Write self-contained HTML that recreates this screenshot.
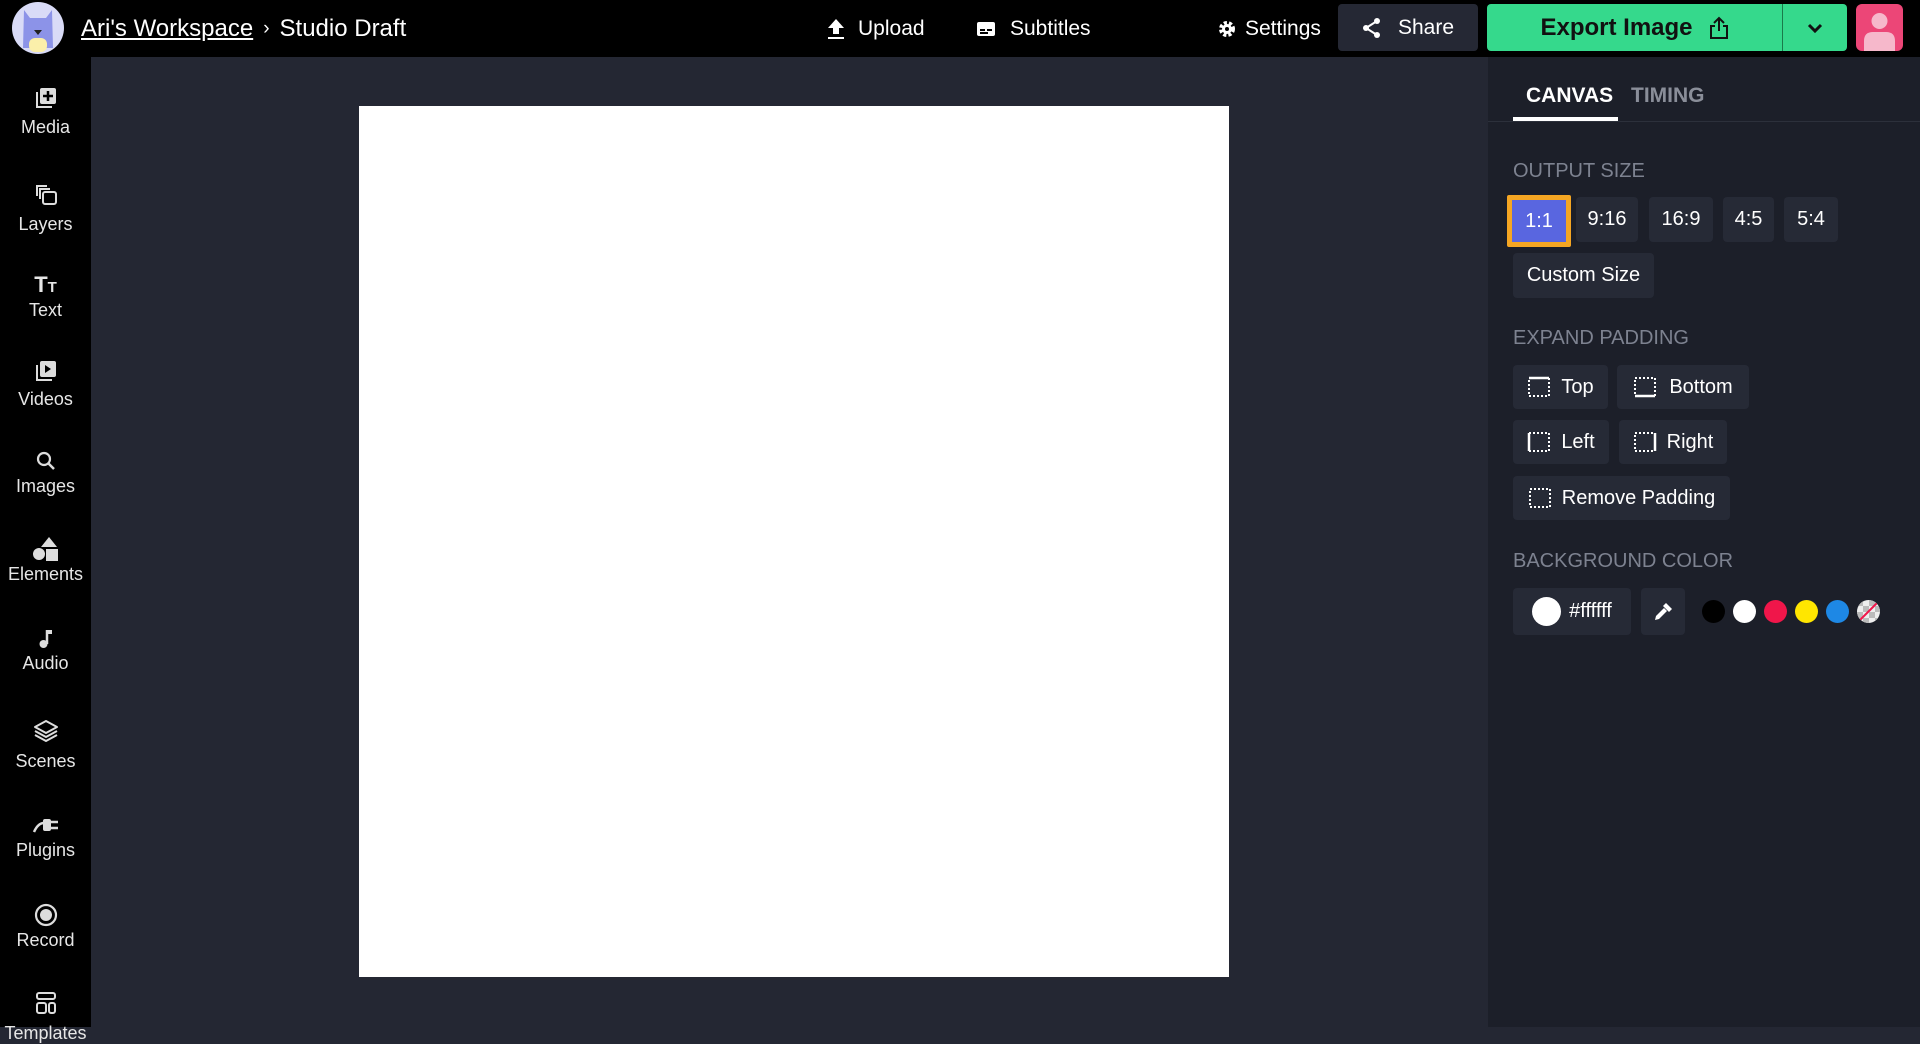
<!DOCTYPE html>
<html><head><meta charset="utf-8"><style>
*{box-sizing:border-box;margin:0;padding:0}
body{width:1920px;height:1027px;overflow:hidden;background:#242733;font-family:"Liberation Sans",sans-serif;color:#fff;position:relative}
.abs{position:absolute}
#top{left:0;top:0;width:1920px;height:57px;background:#000}
#side{left:0;top:57px;width:91px;height:970px;background:#000}
#panel{left:1488px;top:57px;width:432px;height:970px;background:#1c1f29}
.si{position:absolute;left:0;width:91px;text-align:center;font-size:18px;color:#e6e6e6}
.si svg{display:block;margin:0 auto}
.btn{position:absolute;background:#262a36;border-radius:4px;font-size:20px;color:#fff;display:flex;align-items:center;justify-content:center}
.lbl{position:absolute;left:1513px;font-size:20px;color:#7d8290}
.tb{position:absolute;top:0;height:57px;display:flex;align-items:center;font-size:21px;color:#fff}
.dot{position:absolute;width:23px;height:23px;border-radius:50%;top:600px}
</style></head><body>
<div class="abs" id="top"></div>
<div class="abs" id="side"></div>
<div class="abs" id="panel"></div>
<svg class="abs" style="left:12px;top:2px" width="52" height="52" viewBox="0 0 52 52"><circle cx="26" cy="26" r="26" fill="#d9dbf7"/><path d="M12 8 L18 16 L34 16 L40 8 L41 46 L11 46 Z" fill="#8c93e8"/><path d="M22 28 L30 28 L26 33Z" fill="#222"/><rect x="17" y="36" width="18" height="14" rx="6" fill="#fbefaa"/></svg>
<div class="tb" style="left:81px;font-size:24px"><span style="text-decoration:underline">Ari's Workspace</span><span style="margin:0 10px;font-size:19px">›</span>Studio Draft</div>
<div class="tb" style="left:826px"><svg width="20" height="22" viewBox="0 0 20 22"><path d="M10 1 L18 10 H13 V16 H7 V10 H2Z" fill="#fff"/><rect x="2" y="19" width="16" height="2" fill="#fff"/></svg><span style="margin-left:12px">Upload</span></div>
<div class="tb" style="left:976px"><svg width="20" height="16" viewBox="0 0 20 16"><rect x="1" y="1" width="18" height="14" rx="2" fill="#fff"/><rect x="4" y="8" width="5" height="2" fill="#000"/><rect x="11" y="8" width="5" height="2" fill="#000"/><rect x="4" y="11" width="8" height="2" fill="#000"/></svg><span style="margin-left:14px">Subtitles</span></div>
<div class="tb" style="left:1218px"><svg width="18" height="18" viewBox="0 0 18 18"><circle cx="9" cy="9" r="6" fill="none" stroke="#fff" stroke-width="4" stroke-dasharray="3 2"/><circle cx="9" cy="9" r="5" fill="#fff"/><circle cx="9" cy="9" r="2" fill="#000"/></svg><span style="margin-left:9px">Settings</span></div>
<div class="btn" style="left:1338px;top:4px;width:140px;height:47px;background:#252834;font-size:21px"><svg width="20" height="22" viewBox="0 0 20 22"><circle cx="15" cy="4" r="3" fill="#fff"/><circle cx="4" cy="11" r="3" fill="#fff"/><circle cx="15" cy="18" r="3" fill="#fff"/><path d="M15 4 L4 11 L15 18" stroke="#fff" stroke-width="2" fill="none"/></svg><span style="margin-left:16px">Share</span></div>
<div class="btn" style="left:1487px;top:4px;width:295px;height:47px;background:#35d98c;color:#111;font-weight:bold;font-size:24px;border-radius:4px 0 0 4px">Export Image<svg style="margin-left:16px" width="20" height="24" viewBox="0 0 20 24"><path d="M6 10 H2 V22 H18 V10 H14 M10 15 V2 M5 7 L10 2 L15 7" stroke="#111" stroke-width="2" fill="none"/></svg></div>
<div class="btn" style="left:1783px;top:4px;width:64px;height:47px;background:#35d98c;border-radius:0 4px 4px 0"><svg width="16" height="10" viewBox="0 0 16 10"><path d="M2 2 L8 8 L14 2" stroke="#111" stroke-width="3" fill="none"/></svg></div>
<div class="abs" style="left:1782px;top:4px;width:1px;height:47px;background:#1a7a4a"></div>
<div class="abs" style="left:1856px;top:4px;width:47px;height:47px;background:#ec4677;border-radius:6px;overflow:hidden"><svg width="47" height="47" viewBox="0 0 47 47"><circle cx="23.5" cy="17" r="8" fill="#f6b8cb"/><path d="M8 47 V37 Q8 28 17 28 H30 Q39 28 39 37 V47Z" fill="#f6b8cb"/></svg></div>
<div class="abs" style="left:359px;top:106px;width:870px;height:871px;background:#fff"></div>
<div class="si" style="top:86px"><svg width="24" height="24" viewBox="0 0 24 24"><path d="M3 6 V21 H18" stroke="#ddd" stroke-width="2" fill="none"/><rect x="6" y="2" width="16" height="16" rx="2" fill="#ddd"/><path d="M14 5 V15 M9 10 H19" stroke="#000" stroke-width="2.5"/></svg><div style="margin-top:7px">Media</div></div>
<div class="si" style="top:183px"><svg width="24" height="24" viewBox="0 0 24 24"><path d="M3 13 V3 H13" stroke="#ddd" stroke-width="2" fill="none"/><path d="M6 16 V6 H16" stroke="#ddd" stroke-width="2" fill="none"/><rect x="9" y="9" width="13" height="12" rx="2" stroke="#ddd" stroke-width="2" fill="none"/></svg><div style="margin-top:7px">Layers</div></div>
<div class="si" style="top:274px"><div style="font-weight:bold;font-size:22px;line-height:22px">T<span style="font-size:15px">T</span></div><div style="margin-top:1px">Text</div></div>
<div class="si" style="top:359px"><svg width="24" height="24" viewBox="0 0 24 24"><path d="M3 6 V21 H18" stroke="#ddd" stroke-width="2" fill="none"/><rect x="6" y="2" width="16" height="16" rx="2" fill="#ddd"/><path d="M11 6 L17 10 L11 14Z" fill="#000"/></svg><div style="margin-top:6px">Videos</div></div>
<div class="si" style="top:450px"><svg width="22" height="22" viewBox="0 0 22 22"><circle cx="9" cy="9" r="6" stroke="#ddd" stroke-width="2.2" fill="none"/><path d="M13 13 L19 19" stroke="#ddd" stroke-width="2.5"/></svg><div style="margin-top:4px">Images</div></div>
<div class="si" style="top:536px"><svg width="28" height="26" viewBox="0 0 28 26"><path d="M17 1 L25 11 H9Z" fill="#ddd"/><circle cx="7" cy="18" r="6" fill="#ddd"/><rect x="14" y="13" width="12" height="12" fill="#ddd"/></svg><div style="margin-top:2px">Elements</div></div>
<div class="si" style="top:628px"><svg width="20" height="22" viewBox="0 0 20 22"><path d="M11 2 V16" stroke="#ddd" stroke-width="2.5"/><path d="M11 2 H16 V6 H11" fill="#ddd"/><circle cx="7.5" cy="16" r="4" fill="#ddd"/></svg><div style="margin-top:3px">Audio</div></div>
<div class="si" style="top:719px"><svg width="26" height="24" viewBox="0 0 26 24"><path d="M13 2 L24 8 L13 14 L2 8Z M2 12 L13 18 L24 12 M2 16 L13 22 L24 16" stroke="#ddd" stroke-width="2" fill="none" stroke-linejoin="round"/></svg><div style="margin-top:8px">Scenes</div></div>
<div class="si" style="top:815px"><svg width="28" height="20" viewBox="0 0 28 20"><path d="M2 17 Q6 8 12 8" stroke="#ddd" stroke-width="2.5" fill="none"/><rect x="11" y="4" width="8" height="12" rx="2" fill="#ddd"/><path d="M19 7 H26 M19 13 H26" stroke="#ddd" stroke-width="2.5"/></svg><div style="margin-top:5px">Plugins</div></div>
<div class="si" style="top:903px"><svg width="24" height="24" viewBox="0 0 24 24"><circle cx="12" cy="12" r="10" stroke="#ddd" stroke-width="2.2" fill="none"/><circle cx="12" cy="12" r="6" fill="#ddd"/></svg><div style="margin-top:3px">Record</div></div>
<div class="si" style="top:991px"><svg width="22" height="24" viewBox="0 0 22 24"><rect x="2" y="2" width="18" height="6" rx="2" stroke="#ddd" stroke-width="2" fill="none"/><rect x="2" y="12" width="9" height="10" rx="2" stroke="#ddd" stroke-width="2" fill="none"/><rect x="14" y="12" width="6" height="10" rx="2" stroke="#ddd" stroke-width="2" fill="none"/></svg><div style="margin-top:8px">Templates</div></div>
<div class="abs" style="left:1488px;top:121px;width:432px;height:1px;background:#2c303b"></div>
<div class="abs" style="left:1526px;top:84px;font-size:21px;font-weight:bold;color:#fff">CANVAS</div>
<div class="abs" style="left:1631px;top:84px;font-size:21px;font-weight:bold;color:#8a8e99">TIMING</div>
<div class="abs" style="left:1513px;top:117px;width:105px;height:4px;background:#fff"></div>
<div class="lbl" style="top:160px">OUTPUT SIZE</div>
<div class="btn" style="left:1507px;top:195px;width:64px;height:52px;background:#5966e0;border:5px solid #f5a623;border-radius:2px">1:1</div>
<div class="btn" style="left:1576px;top:197px;width:62px;height:45px">9:16</div>
<div class="btn" style="left:1649px;top:197px;width:64px;height:45px">16:9</div>
<div class="btn" style="left:1723px;top:197px;width:51px;height:45px">4:5</div>
<div class="btn" style="left:1784px;top:197px;width:54px;height:45px">5:4</div>
<div class="btn" style="left:1513px;top:253px;width:141px;height:45px">Custom Size</div>
<div class="lbl" style="top:327px">EXPAND PADDING</div>
<div class="btn" style="left:1513px;top:365px;width:95px;height:44px"><svg width="24" height="24" viewBox="0 0 24 24"><rect x="2" y="3" width="20" height="18" stroke="#fff" stroke-width="2" stroke-dasharray="2 2" fill="none"/><path d="M2 3 H22" stroke="#fff" stroke-width="2.5"/></svg><span style="margin-left:10px">Top</span></div>
<div class="btn" style="left:1617px;top:365px;width:132px;height:44px"><svg width="24" height="24" viewBox="0 0 24 24"><rect x="2" y="3" width="20" height="18" stroke="#fff" stroke-width="2" stroke-dasharray="2 2" fill="none"/><path d="M2 21 H22" stroke="#fff" stroke-width="2.5"/></svg><span style="margin-left:12px">Bottom</span></div>
<div class="btn" style="left:1513px;top:420px;width:96px;height:44px"><svg width="24" height="24" viewBox="0 0 24 24"><rect x="2" y="3" width="20" height="18" stroke="#fff" stroke-width="2" stroke-dasharray="2 2" fill="none"/><path d="M2 3 V21" stroke="#fff" stroke-width="2.5"/></svg><span style="margin-left:10px">Left</span></div>
<div class="btn" style="left:1619px;top:420px;width:108px;height:44px"><svg width="24" height="24" viewBox="0 0 24 24"><rect x="2" y="3" width="20" height="18" stroke="#fff" stroke-width="2" stroke-dasharray="2 2" fill="none"/><path d="M22 3 V21" stroke="#fff" stroke-width="2.5"/></svg><span style="margin-left:10px">Right</span></div>
<div class="btn" style="left:1513px;top:476px;width:217px;height:44px"><svg width="24" height="24" viewBox="0 0 24 24"><rect x="2" y="3" width="20" height="18" stroke="#fff" stroke-width="2" stroke-dasharray="2 2" fill="none"/></svg><span style="margin-left:10px">Remove Padding</span></div>
<div class="lbl" style="top:550px">BACKGROUND COLOR</div>
<div class="btn" style="left:1513px;top:588px;width:118px;height:47px"><span style="width:29px;height:29px;border-radius:50%;background:#fff;display:inline-block"></span><span style="margin-left:8px">#ffffff</span></div>
<div class="btn" style="left:1641px;top:588px;width:44px;height:47px"><svg width="22" height="22" viewBox="0 0 22 22"><path d="M14 2 L20 8 L17 11 L11 5Z" fill="#fff"/><path d="M12 7 L4 15 L3 19 L7 18 L15 10" fill="#fff"/></svg></div>
<div class="dot" style="left:1702px;background:#000"></div>
<div class="dot" style="left:1733px;background:#fff"></div>
<div class="dot" style="left:1764px;background:#f0164a"></div>
<div class="dot" style="left:1795px;background:#ffe600"></div>
<div class="dot" style="left:1826px;background:#1e88e5"></div>
<svg class="abs" style="left:1857px;top:600px" width="23" height="23" viewBox="0 0 23 23"><defs><clipPath id="c"><circle cx="11.5" cy="11.5" r="11.5"/></clipPath></defs><g clip-path="url(#c)"><rect width="23" height="23" fill="#eee"/><path d="M0 0h6v6H0zM12 0h6v6h-6zM6 6h6v6H6zM18 6h6v6h-6zM0 12h6v6H0zM12 12h6v6h-6zM6 18h6v6H6zM18 18h6v6h-6z" fill="#bbb"/><path d="M2 21 L21 2" stroke="#f0164a" stroke-width="2"/></g></svg>
</body></html>
